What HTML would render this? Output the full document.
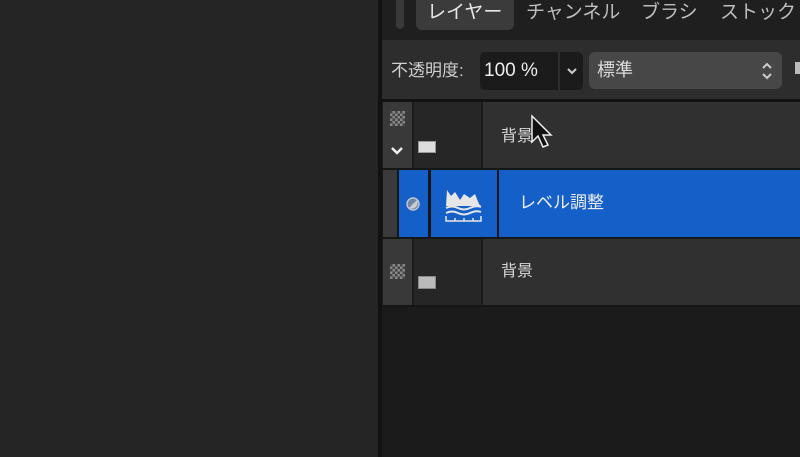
<!DOCTYPE html>
<html><head><meta charset="utf-8"><style>
*{margin:0;padding:0;box-sizing:border-box}
body{width:800px;height:457px;overflow:hidden;background:#252525;font-family:"Liberation Sans","Noto Sans CJK JP",sans-serif;position:relative}
.a{position:absolute}
.t{color:#d8d8d8;font-size:17px;white-space:nowrap;line-height:1.2}
</style></head><body>
<div class="a" style="left:378px;top:0;width:4px;height:457px;background:#121212"></div>
<div class="a" style="left:382px;top:0;width:418px;height:457px;background:#1b1b1b"></div>
<div class="a" style="left:382px;top:0;width:418px;height:40px;background:#1f1f1f"></div>
<div class="a" style="left:396px;top:0;width:8px;height:29px;background:#3a3a3a;border-radius:0 0 4px 4px"></div>
<div class="a" style="left:416px;top:0;width:98px;height:30px;background:#3b3b3b;border-radius:0 0 6px 6px"></div>
<div class="a t" style="left:427px;top:2px;font-size:19px;color:#e8e8e8">レイヤー</div>
<div class="a t" style="left:526px;top:2px;font-size:19px;color:#bdbdbd">チャンネル</div>
<div class="a t" style="left:641px;top:2px;font-size:19px;color:#bdbdbd">ブラシ</div>
<div class="a t" style="left:720px;top:2px;font-size:19px;color:#bdbdbd">ストック</div>
<div class="a" style="left:382px;top:40px;width:418px;height:59px;background:#2d2d2d"></div>
<div class="a t" style="left:391px;top:61px;font-size:17px;color:#cfcfcf">不透明度:</div>
<div class="a" style="left:480px;top:52px;width:78px;height:38px;background:#1b1b1b;border-radius:5px 0 0 5px"></div>
<div class="a t" style="left:484px;top:60px;font-size:19px;color:#eee">100 %</div>
<div class="a" style="left:560px;top:52px;width:23px;height:38px;background:#1b1b1b;border-radius:0 5px 5px 0"></div>
<svg class="a" style="left:566px;top:66px" width="12" height="10"><path d="M2 3l4 4 4-4" stroke="#ccc" stroke-width="2" fill="none"/></svg>
<div class="a" style="left:589px;top:52px;width:193px;height:37px;background:#474747;border-radius:6px"></div>
<div class="a t" style="left:597px;top:60px;font-size:18px;color:#ddd">標準</div>
<svg class="a" style="left:760px;top:60px" width="14" height="22"><path d="M3 8l4-4 4 4M3 14l4 4 4-4" stroke="#ccc" stroke-width="2" fill="none"/></svg>
<div class="a" style="left:795px;top:62px;width:5px;height:12px;background:#bbb"></div>
<div class="a" style="left:382px;top:99px;width:418px;height:3px;background:#121212"></div>
<!-- row1 -->
<div class="a" style="left:383px;top:102px;width:29px;height:66px;background:#393939"></div>
<div class="a" style="left:414px;top:102px;width:67px;height:66px;background:#262626"></div>
<div class="a" style="left:483px;top:102px;width:317px;height:66px;background:#303030"></div>
<div class="a" style="left:390px;top:111px;width:15px;height:15px;background:repeating-conic-gradient(#888 0 25%,#444 0 50%) 0 0/5px 5px"></div>
<svg class="a" style="left:389px;top:145px" width="16" height="12"><path d="M3 3l5 5 5-5" stroke="#eee" stroke-width="2.5" fill="none"/></svg>
<div class="a" style="left:418px;top:141px;width:18px;height:12px;background:#ddd;border:1px solid #999"></div>
<div class="a t" style="left:501px;top:127px;font-size:16px">背景</div>
<svg class="a" style="left:530px;top:114px" width="24" height="36"><path d="M2 2v26l6-6 5 11 5-2-5-10h8z" fill="#111" stroke="#eee" stroke-width="1.5"/></svg>
<!-- row2 -->
<div class="a" style="left:382px;top:168px;width:418px;height:71px;background:#161616"></div>
<div class="a" style="left:383px;top:170px;width:14px;height:67px;background:#3a3a3a"></div>
<div class="a" style="left:399px;top:170px;width:29px;height:67px;background:#1560c8"></div>
<div class="a" style="left:431px;top:170px;width:66px;height:67px;background:#1560c8"></div>
<div class="a" style="left:499px;top:170px;width:301px;height:67px;background:#1560c8"></div>
<svg class="a" style="left:405px;top:196px" width="16" height="16"><circle cx="8" cy="8" r="6" fill="#6f86a8" stroke="#b8c4d4" stroke-width="1.5"/><path d="M4 12L12 4A6 6 0 0 1 4 12z" fill="#ccc"/></svg>
<svg class="a" style="left:443px;top:184px" width="42" height="40"><path d="M3 22L4 6 8 12 12 8 17 16 21 10 27 14 32 10 36 20 38 22z" fill="#e6e6e6"/><path d="M3 24q6-3 12 0t12 0 11-1" stroke="#e6e6e6" stroke-width="2" fill="none"/><path d="M3 29q6-3 12 0t12 0 11-1" stroke="#e6e6e6" stroke-width="2" fill="none"/><path d="M3 32v5h35v-5M12 37v-3M21 37v-3M30 37v-3" stroke="#e6e6e6" stroke-width="1.5" fill="none"/></svg>
<div class="a t" style="left:519px;top:193px;font-size:17px;color:#eee">レベル調整</div>
<!-- row3 -->
<div class="a" style="left:383px;top:239px;width:29px;height:66px;background:#393939"></div>
<div class="a" style="left:414px;top:239px;width:67px;height:66px;background:#262626"></div>
<div class="a" style="left:483px;top:239px;width:317px;height:66px;background:#303030"></div>
<div class="a" style="left:390px;top:264px;width:15px;height:15px;background:repeating-conic-gradient(#888 0 25%,#444 0 50%) 0 0/5px 5px"></div>
<div class="a" style="left:418px;top:276px;width:18px;height:13px;background:#bbb;border:1px solid #888"></div>
<div class="a t" style="left:501px;top:262px;font-size:16px">背景</div>
<div class="a" style="left:382px;top:305px;width:418px;height:2px;background:#161616"></div>
</body></html>
